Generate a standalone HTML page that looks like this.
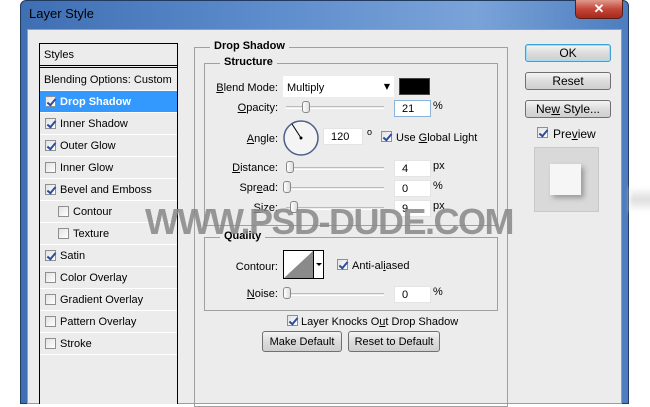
<!DOCTYPE html>
<html><head><meta charset="utf-8"><style>
*{margin:0;padding:0;box-sizing:border-box}
body{width:650px;height:404px;position:relative;overflow:hidden;background:#fff;font-family:"Liberation Sans",Arial,sans-serif;font-size:11px;color:#000}
.a{position:absolute}
.frame{left:20px;top:0;width:609px;height:404px;background:linear-gradient(90deg,#3f6fb3,#5d8ccc 40%,#7aa3d8 75%,#4d7dbf);border-radius:6px 6px 0 0;border:1px solid #203a60}
.client{left:27px;top:29px;width:595px;height:375px;background:#ececec;border:1px solid #8aa0bd}
.title{left:29px;top:6px;font-size:13px;color:#000}
.close{left:575px;top:-1px;width:48px;height:20px;background:linear-gradient(#e09a8c,#c2473a 50%,#a8281c);border:1px solid #5a1e16;border-radius:0 0 5px 5px;color:#fff;text-align:center;font-weight:bold;font-size:13px;line-height:17px}
.list{left:39px;top:43px;width:139px;height:361px;border:1px solid #000;border-bottom:none;background:#ececec}
.li{position:absolute;left:0;width:137px;height:22px;border-bottom:1px solid #fff;line-height:22px;padding-left:20px}
.cb{position:absolute;width:11px;height:11px;border:1px solid #8f8f8f;background:linear-gradient(135deg,#e2e2e2,#fff)}
.cb.on::after{content:"";position:absolute;left:3px;top:0px;width:3px;height:7px;border-right:2px solid #2c4d9c;border-bottom:2px solid #2c4d9c;transform:rotate(40deg)}
.gb{position:absolute;border:1px solid #a0a0a0}
.lg{position:absolute;background:#ececec;font-weight:bold;padding:0 4px;font-size:11px}
.lbl{position:absolute;text-align:right;width:90px}
.inp{position:absolute;background:#fff;border:1px solid #e4e4e4;height:17px;padding-left:7px;line-height:17px;width:37px}
.sl{position:absolute;height:3px;border-top:1px solid #bbb;border-bottom:1px solid #fff;width:98px}
.kn{position:absolute;width:8px;height:12px;border:1px solid #888;border-radius:3px;background:linear-gradient(90deg,#fff,#ddd)}
.btn{position:absolute;border:1px solid #707070;border-radius:3px;background:linear-gradient(#f4f4f4,#dcdcdc 50%,#cfcfcf);text-align:center;font-size:12px;line-height:17px}
u{text-decoration:underline}
</style></head><body>
<div class="a frame"></div>
<div class="a title">Layer Style</div>
<div class="a close">✕</div>
<div class="a client"></div>

<div class="a list">
 <div class="li" style="top:0;height:24px;padding-left:4px;border-bottom:3px double #000;line-height:23px">Styles</div>
 <div class="li" style="top:25px;padding-left:4px">Blending Options: Custom</div>
 <div class="li" style="top:47px;background:#3399ff;color:#fff;font-weight:bold"><span class="cb on" style="left:5px;top:5px"></span>Drop Shadow</div>
 <div class="li" style="top:69px"><span class="cb on" style="left:5px;top:5px"></span>Inner Shadow</div>
 <div class="li" style="top:91px"><span class="cb on" style="left:5px;top:5px"></span>Outer Glow</div>
 <div class="li" style="top:113px"><span class="cb" style="left:5px;top:5px"></span>Inner Glow</div>
 <div class="li" style="top:135px"><span class="cb on" style="left:5px;top:5px"></span>Bevel and Emboss</div>
 <div class="li" style="top:157px;padding-left:33px"><span class="cb" style="left:18px;top:5px"></span>Contour</div>
 <div class="li" style="top:179px;padding-left:33px"><span class="cb" style="left:18px;top:5px"></span>Texture</div>
 <div class="li" style="top:201px"><span class="cb on" style="left:5px;top:5px"></span>Satin</div>
 <div class="li" style="top:223px"><span class="cb" style="left:5px;top:5px"></span>Color Overlay</div>
 <div class="li" style="top:245px"><span class="cb" style="left:5px;top:5px"></span>Gradient Overlay</div>
 <div class="li" style="top:267px"><span class="cb" style="left:5px;top:5px"></span>Pattern Overlay</div>
 <div class="li" style="top:289px"><span class="cb" style="left:5px;top:5px"></span>Stroke</div>
</div>

<div class="gb" style="left:194px;top:47px;width:314px;height:360px"></div>
<div class="lg" style="left:210px;top:40px">Drop Shadow</div>
<div class="gb" style="left:204px;top:63px;width:294px;height:163px"></div>
<div class="lg" style="left:220px;top:56px">Structure</div>

<div class="lbl" style="left:188px;top:82px"><u>B</u>lend Mode:</div>
<div class="a" style="left:283px;top:76px;width:111px;height:21px;background:#fff;padding:6px 0 0 4px">Multiply<span style="position:absolute;right:4px;top:6px;font-size:8px;font-family:'DejaVu Sans'">▼</span></div>
<div class="a" style="left:399px;top:78px;width:31px;height:17px;background:#000;border:1px solid #444"></div>

<div class="lbl" style="left:188px;top:102px"><u>O</u>pacity:</div>
<div class="sl" style="left:286px;top:106px"></div><div class="kn" style="left:302px;top:101px"></div>
<div class="inp" style="left:394px;top:100px;border-color:#8ab4d8">21</div><div class="a" style="left:433px;top:100px">%</div>

<div class="lbl" style="left:188px;top:133px"><u>A</u>ngle:</div>
<svg class="a" style="left:282px;top:119px" width="38" height="38"><circle cx="19" cy="19" r="17" fill="#f4f4f4" stroke="#4d5f8a" stroke-width="1.5"/><line x1="19" y1="19" x2="10" y2="5" stroke="#000"/><circle cx="19" cy="19" r="1.5"/></svg>
<div class="inp" style="left:323px;top:128px;width:40px">120</div><div class="a" style="left:367px;top:127px;font-size:9px">o</div>
<span class="cb on" style="left:381px;top:131px"></span><div class="a" style="left:396px;top:132px">Use <u>G</u>lobal Light</div>

<div class="lbl" style="left:188px;top:162px"><u>D</u>istance:</div>
<div class="sl" style="left:286px;top:167px"></div><div class="kn" style="left:286px;top:161px"></div>
<div class="inp" style="left:394px;top:160px">4</div><div class="a" style="left:433px;top:160px">px</div>
<div class="lbl" style="left:188px;top:182px">Spr<u>e</u>ad:</div>
<div class="sl" style="left:286px;top:187px"></div><div class="kn" style="left:283px;top:181px"></div>
<div class="inp" style="left:394px;top:180px">0</div><div class="a" style="left:433px;top:180px">%</div>
<div class="lbl" style="left:188px;top:202px"><u>S</u>ize:</div>
<div class="sl" style="left:286px;top:207px"></div><div class="kn" style="left:290px;top:201px"></div>
<div class="inp" style="left:394px;top:200px">9</div><div class="a" style="left:433px;top:200px">px</div>

<div class="gb" style="left:204px;top:237px;width:294px;height:74px"></div>
<div class="lg" style="left:220px;top:230px">Quality</div>
<div class="lbl" style="left:188px;top:261px">Contour:</div>
<svg class="a" style="left:283px;top:250px" width="41" height="29"><rect x="0.5" y="0.5" width="40" height="28" fill="#fff" stroke="#000"/><polygon points="1,28 30,1 30,28" fill="#8a8a8a"/><line x1="30.5" y1="0" x2="30.5" y2="29" stroke="#000"/><polygon points="33,13 39,13 36,16" fill="#000"/></svg>
<span class="cb on" style="left:337px;top:259px"></span><div class="a" style="left:352px;top:260px">Anti-al<u>i</u>ased</div>
<div class="lbl" style="left:188px;top:288px"><u>N</u>oise:</div>
<div class="sl" style="left:286px;top:293px"></div><div class="kn" style="left:283px;top:287px"></div>
<div class="inp" style="left:394px;top:286px">0</div><div class="a" style="left:433px;top:286px">%</div>

<span class="cb on" style="left:287px;top:315px"></span><div class="a" style="left:301px;top:316px">Layer Knocks O<u>u</u>t Drop Shadow</div>
<div class="btn" style="left:262px;top:331px;width:80px;height:21px;line-height:20px;font-size:11px">Make Default</div>
<div class="btn" style="left:348px;top:331px;width:92px;height:21px;line-height:20px;font-size:11px">Reset to Default</div>

<div class="btn" style="left:525px;top:44px;width:86px;height:18px;border-color:#3c9fd6;box-shadow:inset 0 0 0 1px #9fdcf7">OK</div>
<div class="btn" style="left:525px;top:72px;width:86px;height:18px">Reset</div>
<div class="btn" style="left:525px;top:100px;width:86px;height:18px">Ne<u>w</u> Style...</div>
<span class="cb on" style="left:537px;top:127px"></span><div class="a" style="left:553px;top:127px;font-size:12px">Pre<u>v</u>iew</div>
<div class="a" style="left:534px;top:147px;width:65px;height:65px;background:#d9d9d9;border:1px solid #c8c8c8"></div>
<div class="a" style="left:550px;top:164px;width:31px;height:31px;background:#f6f6f6;box-shadow:3px 3px 5px #999"></div>

<div class="a" style="left:145px;top:203px;font-family:'Liberation Sans',Arial,sans-serif;font-weight:bold;font-size:36px;letter-spacing:-1.5px;color:rgba(135,135,135,0.85);line-height:38px;white-space:nowrap">WWW.PSD-DUDE.COM</div>
<div class="a" style="left:630px;top:187px;width:30px;height:25px;background:linear-gradient(#fff,#ddd 50%,#fff);filter:blur(2px)"></div>
</body></html>
